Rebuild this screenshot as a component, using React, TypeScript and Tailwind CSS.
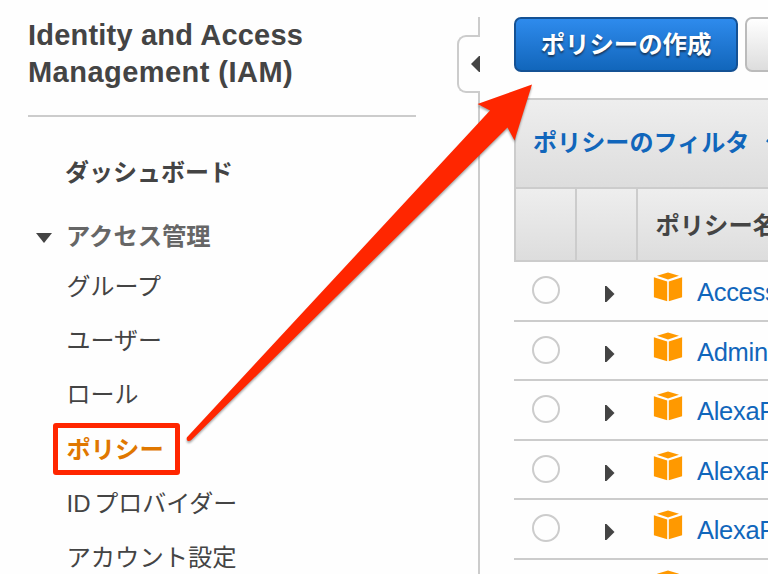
import React from "react";

const navItems = ["グループ", "ユーザー", "ロール", "ポリシー", "ID プロバイダー", "アカウント設定"];
const policies = ["Access", "Admin", "AlexaF", "AlexaF", "AlexaF", ""];

function CubeIcon() {
  return (
    <svg width="30" height="30" viewBox="0 0 30 30" className="shrink-0" fill="#ff9900">
      <path d="M15 .6 26 3.8 15 7.4 4 3.8Z" />
      <path d="M.9 5.2 14.2 9.4V29.3L.9 25.2Z" />
      <path d="M29.1 5.2 15.8 9.4V29.3L29.1 25.2Z" />
    </svg>
  );
}

function Sidebar() {
  return (
    <aside className="w-[457px] shrink-0 pl-7 text-[#444]">
      <h1 className="h-[115px] whitespace-nowrap pt-[17px] text-[29px] font-bold leading-[37px] tracking-[0.2px]">
        Identity and Access
        <br />
        <span className="tracking-[0.46px]">Management (IAM)</span>
      </h1>
      <div className="h-0.5 w-[388px] bg-[#ccc]" />
      <nav className="text-2xl">
        <div className="flex h-[93px] items-center pl-[37px] pt-[19px] font-bold">ダッシュボード</div>
        <div className="flex h-[49px] items-center pl-2 pt-[5px] text-[24.3px] font-bold text-[#666]">
          <svg width="16" height="10" viewBox="0 0 16 10" className="mr-3.5 mt-0.5" fill="#444">
            <path d="M0 0h16L8 10Z" />
          </svg>
          アクセス管理
        </div>
        <ul>
          {navItems.map((item) => (
            <li
              key={item}
              className="relative flex h-[54.4px] items-center whitespace-nowrap pl-[38.5px] pt-px [word-spacing:-3px]"
            >
              {item === "ポリシー" ? (
                <>
                  <span className="text-[24.3px] font-bold text-[#e07700]">{item}</span>
                  <span className="absolute left-[25px] top-px h-[52px] w-[127px] rounded-[3px] border-[5px] border-[#ff2600]" />
                </>
              ) : item === "アカウント設定" ? (
                <span className="text-[24.3px]">{item}</span>
              ) : (
                item
              )}
            </li>
          ))}
        </ul>
      </nav>
    </aside>
  );
}

function Divider() {
  return (
    <div className="flex w-[57px] shrink-0 flex-col pt-[17px]">
      <div className="ml-[21px] h-[18px] w-[1.5px] bg-[#ccc]" />
      <button className="flex h-[58px] w-[23px] items-center justify-end rounded-l-[9px] border-2 border-r-0 border-[#ccc]">
        <svg width="9" height="16" viewBox="0 0 9 16" fill="#444">
          <path d="M9 0v16H8L0 8 8 0Z" />
        </svg>
      </button>
      <div className="ml-[21px] w-[1.5px] grow bg-[#ccc]" />
    </div>
  );
}

function Main() {
  return (
    <main className="w-[420px] shrink-0">
      <div className="flex h-[98px] gap-[7px] pt-[17px]">
        <button className="h-[55px] w-56 rounded-[7px] border-2 border-[#145194] bg-linear-to-b from-[#2e8bed] to-[#1166bb] pt-px text-[24.4px] font-bold text-white [text-shadow:0_2px_2px_#17385e]">
          ポリシーの作成
        </button>
        <button className="h-[55px] w-40 rounded-[7px] border-2 border-[#bbb] bg-linear-to-b from-white to-[#ddd]" />
      </div>
      <div className="flex h-[91px] items-center border-2 border-[#ccc] bg-linear-to-b from-[#eee] to-[#ddd] pl-[17px] text-[24.1px] font-bold text-[#1166bb]">
        ポリシーのフィルタ
        <svg width="16" height="9" viewBox="0 0 16 9" className="ml-[17px]" fill="none" stroke="#1166bb" strokeWidth="3">
          <path d="m1 1 7 6 7-6" />
        </svg>
      </div>
      <div className="flex h-[73px] border-b-2 border-l-2 border-[#ccc] bg-linear-to-b from-[#eee] to-[#ddd] text-[24.3px] font-bold text-[#444]">
        <div className="w-[61px] border-r-2 border-[#ccc]" />
        <div className="w-[61px] border-r-2 border-[#ccc]" />
        <div className="flex items-center whitespace-nowrap pl-[17.5px] pt-[3px]">ポリシー名</div>
      </div>
      {policies.map((name, i) => (
        <div key={i} className="flex h-[59.5px] items-start border-b-2 border-[#ccc]">
          <span className="ml-[17.5px] mt-3.5 size-7 shrink-0 rounded-full border-2 border-[#ccc]" />
          <svg width="10" height="16" viewBox="0 0 10 16" className="ml-[45px] mt-6 shrink-0" fill="#444">
            <path d="M0 0v16h1.5L9.5 8 1.5 0Z" />
          </svg>
          <span className="ml-[38.5px] mt-2.5">
            <CubeIcon />
          </span>
          <a className="ml-3.5 mt-3.5 whitespace-nowrap text-[25.5px] leading-8 tracking-[-0.3px] text-[#1166bb]">{name}</a>
        </div>
      ))}
    </main>
  );
}

export default function App() {
  return (
    <div className="relative flex h-[574px] w-[768px] overflow-hidden bg-[#fefefe] font-['Liberation_Sans','Noto_Sans_CJK_JP',sans-serif]">
      <Sidebar />
      <Divider />
      <Main />
      <svg
        width="768"
        height="574"
        viewBox="0 0 768 574"
        className="pointer-events-none absolute inset-0 drop-shadow-[0_2px_1px_rgba(0,0,0,0.35)]"
      >
        <path
          d="M532 84.5 477.5 104 490 110.5 187 437.3Q186 440 188 441Q189.5 441.4 191 440.3L507.5 127.5 514.5 140.5Z"
          fill="#ff2600"
        />
      </svg>
    </div>
  );
}
